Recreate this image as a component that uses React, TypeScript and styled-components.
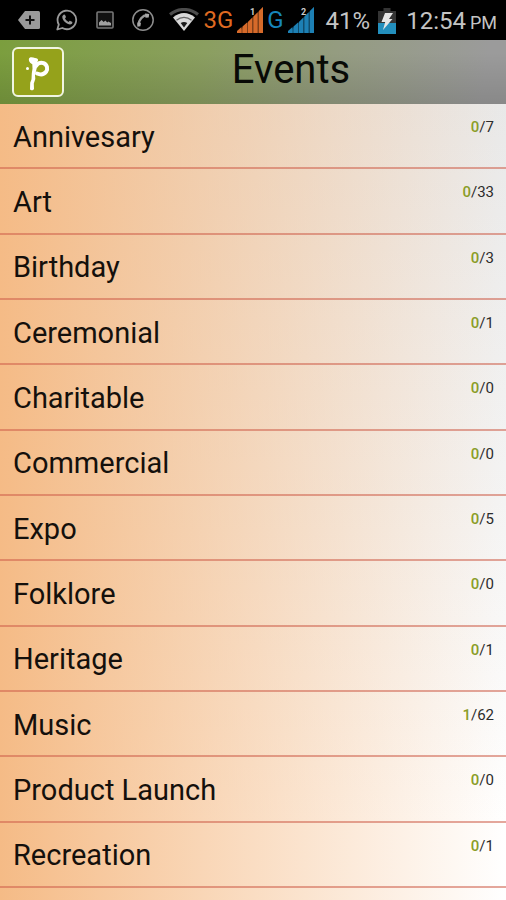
import React from "react";
import styled, { createGlobalStyle } from "styled-components";

const GlobalStyle = createGlobalStyle`
  * { box-sizing: border-box; }
  body {
    margin: 0;
    background: #fadfc6;
    font-family: Roboto, "Liberation Sans", sans-serif;
  }
`;

const Page = styled.div`
  display: flex;
  flex-direction: column;
  min-height: 100vh;
`;

const StatusBar = styled.div`
  display: flex;
  align-items: center;
  justify-content: space-between;
  height: 40px;
  padding: 0 9px 0 10px;
  background: #000;
  color: #c4c4c4;
`;

const Notifications = styled.div`
  display: grid;
  grid-template-columns: repeat(4, 38px);
  justify-items: center;
  align-items: center;
`;

const Indicators = styled.div`
  display: flex;
  align-items: center;
  gap: 4px;
`;

const Network = styled.div`
  display: flex;
  align-items: center;
  gap: 4px;
`;

const Carrier = styled.span<{ $color: string }>`
  font-size: 24px;
  line-height: 40px;
  color: ${(p) => p.$color};
`;

const Power = styled.div`
  display: flex;
  align-items: center;
  gap: 8px;
  margin-left: 8px;
  padding-top: 2px;
  font-size: 24px;
  line-height: 38px;
`;

const Clock = styled.time`
  margin-left: 2px;
`;

const Meridiem = styled.span`
  margin-left: 4px;
  font-size: 18px;
  line-height: 1;
`;

const Header = styled.header`
  display: grid;
  grid-template-columns: 52px 1fr;
  align-items: center;
  height: 64px;
  padding: 0 12px;
  background:
    linear-gradient(180deg, rgba(0, 0, 0, 0) 20%, rgba(0, 0, 0, 0.12) 100%),
    linear-gradient(100deg, #7b9e3e 0%, #8b9f60 40%, #949c80 65%, #9b9b9b 95%);
`;

const HomeButton = styled.button`
  display: flex;
  width: 52px;
  height: 50px;
  padding: 0;
  border: 2px solid #f1f5e2;
  border-radius: 6px;
  background: #95a21b;
  cursor: pointer;
`;

const Title = styled.h1`
  margin: 0;
  padding: 0 0 4px 24px;
  text-align: center;
  font-size: 40px;
  font-weight: 400;
  line-height: 60px;
  color: #080a06;
`;

const EventList = styled.ul`
  flex: 1;
  display: grid;
  grid-auto-rows: minmax(65px, 1fr);
  margin: 0;
  padding: 0 0 12px;
  list-style: none;
  background:
    linear-gradient(90deg, #f5bb86 0%, rgba(245, 187, 134, 0) 100%),
    linear-gradient(180deg, #e9e9e9 0%, #f4f4f4 50%, #ffffff 90%);
`;

const EventItem = styled.li`
  display: flex;
  border-bottom: 2px solid rgba(205, 95, 75, 0.55);
`;

const EventButton = styled.button`
  flex: 1;
  display: flex;
  align-items: center;
  justify-content: space-between;
  padding: 2px 12px 0 13px;
  border: 0;
  background: none;
  color: #14100c;
  font-family: inherit;
  text-align: left;
  cursor: pointer;
`;

const EventName = styled.span`
  font-size: 29px;
  line-height: 40px;
`;

const Count = styled.span`
  align-self: flex-start;
  padding-top: 12px;
  font-size: 15px;
  line-height: 18px;
  color: #2c2c2c;
`;

const Unread = styled.span`
  font-weight: 500;
  color: #8a9d28;
`;

const events = [
  { name: "Annivesary", unread: 0, total: 7 },
  { name: "Art", unread: 0, total: 33 },
  { name: "Birthday", unread: 0, total: 3 },
  { name: "Ceremonial", unread: 0, total: 1 },
  { name: "Charitable", unread: 0, total: 0 },
  { name: "Commercial", unread: 0, total: 0 },
  { name: "Expo", unread: 0, total: 5 },
  { name: "Folklore", unread: 0, total: 0 },
  { name: "Heritage", unread: 0, total: 1 },
  { name: "Music", unread: 1, total: 62 },
  { name: "Product Launch", unread: 0, total: 0 },
  { name: "Recreation", unread: 0, total: 1 },
];

const TagIcon = () => (
  <svg width="22" height="18" viewBox="0 0 22 18" aria-hidden="true">
    <path d="M7 0h13.500a1.500 1.500 0 0 1 1.500 1.500v15a1.500 1.500 0 0 1-1.500 1.500H7L0 9z" fill="#9a9a9a" />
    <path d="M12 4.500v9M7.500 9h9" stroke="#111" strokeWidth="2" />
  </svg>
);

const ChatIcon = () => (
  <svg width="22" height="22" viewBox="0 0 22 22" fill="none" aria-hidden="true">
    <path d="M1.300 20.500l1.500-5A9.300 9.300 0 1 1 6.300 19z" stroke="#9a9a9a" strokeWidth="1.800" strokeLinejoin="round" />
    <path d="M7.600 5.700c.7-.5 1.300-.2 1.600.5l.7 1.600c.2.600-.4 1.100-.9 1.700.8 1.600 2 2.700 3.700 3.400.6-.5 1-1.200 1.600-1l1.800.9c.6.400.3 1.600-.5 2.200-2.500 1.800-9.500-2.500-9.300-7.200 0-.9.600-1.600 1.300-2.100z" fill="#9a9a9a" />
  </svg>
);

const PictureIcon = () => (
  <svg width="18" height="18" viewBox="0 0 18 18" aria-hidden="true">
    <rect x="1" y="1" width="16" height="16" rx="1" fill="#111" stroke="#777" strokeWidth="1.600" />
    <path d="M3 14.500v-3l2.500-2.500 2.200 2 1.600-1.500 2 2 1-1L15 12v2.500z" fill="#a0a0a0" />
  </svg>
);

const CallIcon = () => (
  <svg width="24" height="24" viewBox="0 0 24 24" fill="none" aria-hidden="true">
    <circle cx="12" cy="12" r="10.200" stroke="#8d8d8d" strokeWidth="1.500" />
    <path d="M7.500 17.500C7.500 11.500 11.500 7.500 16.500 7" stroke="#9a9a9a" strokeWidth="2.400" />
    <path d="M6.300 14.500l3.700.3-.6 3.500-3 .5zM14 5.500l4.200.4-.5 3.600-3.200.3z" fill="#a8a8a8" />
  </svg>
);

const WifiIcon = () => (
  <svg width="30" height="24" viewBox="0 0 30 24" fill="none" aria-label="Wi-Fi" role="img">
    <path d="M1 6.500C9-.3 21-.3 29 6.500" stroke="#4c4c4c" strokeWidth="3" />
    <path d="M4 9.500C10.500 3.500 19.500 3.500 26 9.500L15 23z" fill="#d8d8d8" />
    <path d="M7.500 12.300c4.500-4 10.500-4 15 0" stroke="#666" strokeWidth="1.200" />
    <path d="M15 19.500l-3.300-4.500c2-1.500 4.600-1.500 6.600 0z" fill="#1b1b1b" />
  </svg>
);

const SignalIcon = ({ color, sim }: { color: string; sim: number }) => (
  <svg width="26" height="26" viewBox="0 0 26 26" aria-label={`Signal, SIM ${sim}`} role="img">
    <path d="M0 26L26 0v26z" fill={color} opacity="0.600" />
    <path d="M0 26v-2L4.500 20v6zM5.500 26v-6.500L10 15.500V26zM11 26V15l4-4v15zM16.500 26V9.500l4-4V26zM22 26V4l4-4v26z" fill={color} />
    <text x="13" y="8" fontSize="9" fontWeight="700" fill="#ccc">{sim}</text>
  </svg>
);

const BatteryIcon = () => (
  <svg width="18" height="26" viewBox="0 0 18 26" aria-label="Charging" role="img">
    <path d="M5.500 0h7v3H18v23H0V3h5.500z" fill="#343434" />
    <path d="M0 15h18v11H0z" fill="#238fbd" />
    <path d="M7 5h8l-4 6h3.500L5 22l2.200-8H3.500z" fill="#e6e6e6" />
  </svg>
);

const Logo = () => (
  <svg width="48" height="46" viewBox="0 0 48 46" fill="none" aria-hidden="true">
    <path
      d="M15 9.500c1-2 4-1.200 6-.5 2 .1 3.500.8 3 2.500l-1.500 3.500.3 4-1.800 7 .3 4-1.500 4.500.2 5.500c-.8 1.800-3.300 1.700-4 .2l.2-6.500 1.300-3.500.3-6 .7-4.500-.2-4.500c-2-.8-4-3.200-3.300-5.700z"
      fill="#fff"
    />
    <path d="M22 17c1.500-2.700 4.500-4 7.500-2.800 3.800 1.500 4.600 5.800 2.600 8.600-2 2.600-5.600 3.200-9.100 1.700" stroke="#fff" strokeWidth="4" strokeLinecap="round" />
    <circle cx="13.500" cy="19.500" r="1.500" fill="#fff" />
  </svg>
);

export default function App() {
  return (
    <Page>
      <GlobalStyle />
      <StatusBar>
        <Notifications>
          <TagIcon />
          <ChatIcon />
          <PictureIcon />
          <CallIcon />
        </Notifications>
        <Indicators>
          <WifiIcon />
          <Network>
            <Carrier $color="#df6a21">3G</Carrier>
            <SignalIcon color="#d66a2a" sim={1} />
          </Network>
          <Network>
            <Carrier $color="#1686bb">G</Carrier>
            <SignalIcon color="#1d80b4" sim={2} />
          </Network>
          <Power>
            <span>41%</span>
            <BatteryIcon />
            <Clock dateTime="12:54">
              12:54<Meridiem>PM</Meridiem>
            </Clock>
          </Power>
        </Indicators>
      </StatusBar>
      <Header>
        <HomeButton type="button" aria-label="Home">
          <Logo />
        </HomeButton>
        <Title>Events</Title>
      </Header>
      <EventList>
        {events.map((event) => (
          <EventItem key={event.name}>
            <EventButton type="button">
              <EventName>{event.name}</EventName>
              <Count>
                <Unread>{event.unread}</Unread>/{event.total}
              </Count>
            </EventButton>
          </EventItem>
        ))}
      </EventList>
    </Page>
  );
}
